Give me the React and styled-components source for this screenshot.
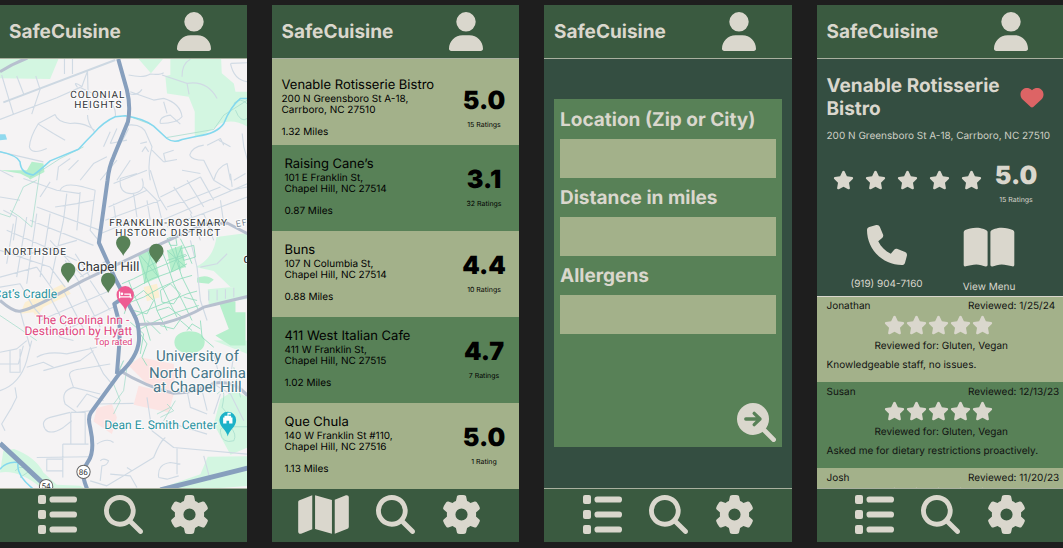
import React from "react";
import styled, { createGlobalStyle } from "styled-components";
import {
  FaUser,
  FaMagnifyingGlass,
  FaGear,
  FaMap,
  FaHeart,
  FaStar,
  FaPhone,
  FaBookOpen,
} from "react-icons/fa6";

const color = {
  board: "#1e1e1e",
  bar: "#3a5a40",
  deep: "#344e41",
  leaf: "#588157",
  sage: "#a3b18a",
  bone: "#dad7cd",
  line: "#a9b09f",
  heart: "#dd6465",
};

const GlobalStyle = createGlobalStyle`
  *, *::before, *::after { box-sizing: border-box; }
  body {
    margin: 0;
    background: ${color.board};
    font-family: Inter, "Liberation Sans", sans-serif;
    text-rendering: geometricPrecision;
    overflow-x: hidden;
  }
  h1, h2, h3, p, ul { margin: 0; padding: 0; }
  ul { list-style: none; }
`;

const Board = styled.main`
  display: grid;
  grid-template-columns: repeat(4, minmax(0, 1fr));
  column-gap: 25px;
  margin: 0 -1px;
  padding: 5px 0 6px;
`;

const Screen = styled.section`
  display: flex;
  flex-direction: column;
  overflow: hidden;
  background: ${color.deep};
  color: ${color.bone};
`;

const Header = styled.header`
  display: flex;
  align-items: center;
  justify-content: space-between;
  height: 54px;
  padding: 0 36px 0 10px;
  background: ${color.bar};
  border-bottom: 1px solid ${color.line};
`;

const Brand = styled.h1`
  font-size: 19px;
  line-height: 24px;
  font-weight: 700;
`;

const IconButton = styled.button`
  display: block;
  padding: 0;
  border: 0;
  background: none;
  color: inherit;
  cursor: pointer;

  svg {
    display: block;
    width: ${(p) => p.$w || 39}px;
    height: ${(p) => p.$h || 39}px;
  }
`;

const HeartButton = styled(IconButton)`
  color: ${color.heart};
`;

const Nav = styled.nav`
  display: flex;
  align-items: center;
  justify-content: flex-end;
  gap: 27px;
  height: 54px;
  padding: 0 38px 2px 0;
  background: ${color.bar};
  border-top: 1px solid ${(p) => p.$line || color.line};
`;

const MapArt = styled.svg`
  display: block;
  flex: 1 1 0;
  width: 100%;
  height: 0;
  min-height: 0;
  background: #f5f3f4;
  font-family: Roboto, "Liberation Sans", sans-serif;
`;

const MapLabel = styled.text`
  font-size: ${(p) => p.$size}px;
  font-weight: ${(p) => p.$weight || 400};
  letter-spacing: ${(p) => (p.$area ? "1px" : "normal")};
  fill: ${(p) => p.$fill || "#333639"};
  stroke: #ffffff;
  stroke-width: 2px;
  stroke-opacity: 0.8;
  stroke-linejoin: round;
  paint-order: stroke;
`;

const Row = styled.li`
  display: flex;
  justify-content: space-between;
  height: 86px;
  padding: 10px 10px 0 13px;
  background: ${(p) => (p.$dark ? color.leaf : color.sage)};
  color: #000;

  &:first-child { padding: 17px 10px 0; }
  &:last-child { height: 85px; }
`;

const RowName = styled.h2`
  font-size: 13px;
  line-height: 18px;
  font-weight: 400;
  white-space: nowrap;
`;

const Small = styled.p`
  font-size: 10px;
  line-height: 11px;
  font-weight: 400;
  white-space: nowrap;
`;

const Distance = styled(Small)`
  margin-top: 11px;
`;

const Score = styled.div`
  width: 50px;
  padding-top: ${(p) => p.$top || 0}px;
  text-align: center;
  white-space: nowrap;
`;

const ScoreValue = styled.strong`
  display: block;
  font-size: 25px;
  line-height: 30px;
  font-weight: 900;
`;

const ScoreCount = styled.span`
  display: block;
  margin-top: 5px;
  font-size: 7px;
  line-height: 8px;
`;

const SearchForm = styled.form`
  flex: 1;
  display: flex;
  flex-direction: column;
  margin: 40px 10px 41px;
  padding: 1px 6px 5px;
  background: ${color.leaf};
`;

const FieldLabel = styled.label`
  font-size: 19px;
  line-height: 39px;
  font-weight: 700;
  white-space: nowrap;
`;

const Field = styled.input`
  width: 100%;
  height: 39px;
  padding: 0 8px;
  border: 0;
  border-radius: 0;
  background: ${color.sage};
  color: #000;
  font: 400 14px Inter, sans-serif;
`;

const Submit = styled(IconButton)`
  align-self: flex-end;
  margin-top: auto;
`;

const Detail = styled.div`
  padding: 15px 10px 0;
  height: 237px;
`;

const DetailTop = styled.div`
  display: flex;
  align-items: center;
  justify-content: space-between;
  padding-right: 10px;
`;

const DetailName = styled.h2`
  font-size: 19px;
  line-height: 23px;
  font-weight: 700;
  white-space: nowrap;
`;

const DetailAddress = styled(Small)`
  margin-top: 11px;
  color: #cfd0c5;
`;

const RatingLine = styled.div`
  display: flex;
  align-items: flex-start;
  justify-content: space-between;
  margin-top: 19px;
  padding: 0 13px 0 6px;
`;

const Stars = styled.div`
  display: flex;
  justify-content: center;
  gap: ${(p) => p.$gap}px;
  padding: ${(p) => p.$pad || 0};
  color: ${color.bone};

  svg {
    width: 21px;
    height: 20px;
    flex: none;
  }
`;

const Actions = styled.div`
  display: flex;
  gap: 40px;
  margin-top: 21px;
  padding-left: 24px;
`;

const Action = styled.a`
  display: flex;
  flex-direction: column;
  align-items: center;
  gap: ${(p) => p.$gap}px;
  color: inherit;
  text-decoration: none;
  white-space: nowrap;
  font-size: 10px;
  line-height: 12px;

  svg {
    width: ${(p) => p.$w}px;
    height: ${(p) => p.$h}px;
  }
`;

const Reviews = styled.ul`
  flex: 1 1 0;
  min-height: 0;
  overflow: hidden;
  border-top: 1px solid ${color.bone};
`;

const Review = styled.li`
  height: 86px;
  padding: 4px 8px 0 10px;
  background: ${(p) => (p.$dark ? color.leaf : color.sage)};
  color: #111;

  &:first-child { height: 85px; padding-top: 3px; }
`;

const ReviewHead = styled.div`
  display: grid;
  grid-template-columns: minmax(0, 1fr) 88px;
  margin-bottom: 2px;
`;

const ReviewText = styled(Small)`
  line-height: 13px;
  margin-top: ${(p) => p.$top}px;
  text-align: ${(p) => (p.$center ? "center" : "left")};
`;

const ListIcon = () => (
  <svg viewBox="0 0 39 39" fill="currentColor" aria-hidden="true">
    {[0, 15, 30].map((y) => (
      <g key={y}>
        <rect x="0" y={y} width="8" height="9" rx="2" />
        <rect x="11.5" y={y + 1.5} width="27.5" height="6" rx="2.8" />
      </g>
    ))}
  </svg>
);

const SearchGoIcon = () => (
  <svg viewBox="0 0 39 39" fill="none" strokeLinecap="round" strokeLinejoin="round" aria-hidden="true">
    <path d="M27 27 36.6 36.6" stroke="currentColor" strokeWidth="4.8" />
    <circle cx="16" cy="16" r="16" fill="currentColor" />
    <path d="M8.8 16H23M17.2 10.4 23 16l-5.8 5.6" stroke={color.leaf} strokeWidth="3.4" />
  </svg>
);

const TopBar = () => (
  <Header>
    <Brand>SafeCuisine</Brand>
    <IconButton type="button" aria-label="Account" $w={34}>
      <FaUser />
    </IconButton>
  </Header>
);

const BottomBar = ({ first = "list", line }) => (
  <Nav $line={line}>
    {first === "map" ? (
      <IconButton type="button" aria-label="Map" $w={51} $h={45}>
        <FaMap />
      </IconButton>
    ) : (
      <IconButton type="button" aria-label="List">
        <ListIcon />
      </IconButton>
    )}
    <IconButton type="button" aria-label="Search">
      <FaMagnifyingGlass />
    </IconButton>
    <IconButton type="button" aria-label="Settings">
      <FaGear />
    </IconButton>
  </Nav>
);

const FiveStars = ({ gap, pad }) => (
  <Stars $gap={gap} $pad={pad} role="img" aria-label="5 out of 5 stars">
    {[1, 2, 3, 4, 5].map((n) => (
      <FaStar key={n} />
    ))}
  </Stars>
);

const Rating = ({ value, count, top }) => (
  <Score $top={top}>
    <ScoreValue>{value}</ScoreValue>
    <ScoreCount>{count}</ScoreCount>
  </Score>
);

/* Map artwork is drawn on a grid three times finer than the labels. */
const parks = [
  "M0 235V177H175L150 237Z",
  "M415 177H488L452 220Z",
  "M510 177H662L664 220 700 250 705 275H741V380Q700 355 660 370 620 402 583 412V335L565 290 500 280 495 228 510 225Z",
  "M648 710 741 698V862L690 860 640 812 585 800Q640 775 648 710Z",
  "M622 866 741 856V895L625 912Z",
  "M10 1350 42 1345Q105 1368 130 1415L170 1452 240 1455 262 1467H130Q60 1405 0 1415Z",
  "M741 1190 700 1170 660 1195 640 1270 690 1362 741 1340Z",
  "M741 1366 622 1368 600 1420 480 1462 590 1467 741 1455Z",
  "M741 1020V1060L690 1040 640 1020Z",
];
const groves = [
  "M95 485 130 490 133 515 90 538 75 520Z",
  "M415 760 455 742 478 830 432 850Z",
  "M500 750 545 735 556 800 512 815Z",
  "M655 905 705 902V935H735V1035H690L645 1005 685 985Z",
  "M590 832Q620 820 640 838L625 850 590 846Z",
  "M522 1025Q524 993 567 992 612 993 613 1025 610 1057 567 1058 524 1057 522 1025Z",
  "M0 510H130L90 535 60 520Z",
];
const campus = [
  "M385 1095 420 1070 520 1090 525 1125 515 1170 440 1150Z",
  "M415 1155 520 1180 505 1235 400 1212Z",
  "M290 1222 335 1210 350 1250 335 1300 280 1262Z",
];
const plazas = [
  "M75 905 190 850 212 880 130 920 110 950 100 935 60 940Z",
  "M430 860 470 850 478 890 440 902Z",
];
const streets = [
  "M5 225 40 342M50 228 72 285M107 228 120 268 95 342M193 177V222M217 177V222M0 358 170 293 240 262M262 213 245 260Q215 240 232 262",
  "M240 262 320 300Q350 320 345 350M165 343Q170 365 210 370 250 365 283 390M115 370Q90 410 88 440 95 465 140 445M115 370 165 343M115 372 160 400 195 420M262 345Q262 370 283 395M262 215 265 330",
  "M385 225Q430 235 450 222 480 225 490 218M386 280Q410 290 425 268M390 275 460 300 490 295M490 295Q540 310 545 350 530 370 480 370M480 370Q475 350 510 345L540 372M490 305 500 340M545 230Q545 190 570 178M485 225 560 250Q620 240 650 295M560 250 566 283M690 190Q700 240 741 245M692 190 741 188",
  "M382 375Q430 370 440 405L455 440Q440 490 450 540M350 385 330 430M330 395 310 440M385 385 375 405 350 450M420 430 440 425M425 455 435 440 445 455M490 485 455 450M490 485 530 478M495 483 490 460 520 450",
  "M568 465Q575 440 610 435M568 465Q575 480 610 480L640 540M640 540Q650 500 680 490L690 540M620 435 660 415 670 435M655 420 690 440M725 400 730 440 741 480M545 510 600 520M700 540 735 520",
  "M0 455 130 485M170 540 175 500 210 475M205 510 235 480M240 540 280 490 320 470M300 540 350 480M0 510 40 530M330 430 380 420M390 480 350 540",
  "M70 535 170 570 240 580M150 545 120 590M180 570Q190 545 250 560L285 570M165 620 230 610 280 600M200 580 190 660M240 575 230 690M285 570 270 690 295 720M110 620 300 690M90 660 280 735M20 690 230 780M0 750 150 800M0 590 60 600M10 630 50 650 40 720",
  "M40 670 20 790M80 650 50 830M110 640 80 850M150 640 120 830M190 660 150 850M150 720 250 830M55 770 230 720M0 830 110 800M110 800 160 870M150 800 195 860M195 780 240 850M225 760 270 830",
  "M0 860 60 850 100 920M100 920 180 1010 220 1020M150 890 210 1000M190 870 250 985M235 850 300 980M270 840 330 930M120 960 330 870M170 1000 350 915M60 930 90 1040M240 830 320 780",
  "M410 520 360 535Q355 580 395 580 440 575 425 535M430 560 470 600 485 660M450 510 475 590 500 630M340 550 440 510M500 620 560 600 660 560M480 590 600 530M520 560 575 640M560 540 610 620M600 530 640 600M485 660 741 550M500 680 741 590M640 540 690 570 741 560M690 520 695 560",
  "M325 620 440 570M315 660 480 600M300 700 400 660M340 610 350 680M400 580 410 650M440 600 450 660M660 600 670 670M610 640 640 720M570 640 600 720M570 720 590 800 600 900 620 960M600 800 650 790 680 760M625 870V900M650 868V900M675 866V895M700 862V890",
  "M0 1055 50 1045 80 1020M30 1050V1115H60V1045M0 1090H55L70 1035M0 1170Q60 1150 80 1080L95 1020M80 1100 130 1085 160 1100M45 1160 50 1190 35 1220 5 1270 15 1290M110 1070Q140 1050 200 1060L290 1040M130 1110 240 1080 280 1050M210 1130Q200 1110 240 1105L330 1090M210 1130 220 1160Q180 1170 195 1210L230 1235 270 1230",
  "M135 1285Q120 1260 150 1250L210 1235M135 1285Q150 1305 190 1280L215 1260M220 1160 300 1180M212 1235V1330M212 1235H255V1330M188 1330H265M188 1330V1430M140 1375H188V1410H140ZM110 1370 270 1368M270 1040 310 1120 335 1150M230 1220 260 1180 310 1200",
  "M290 1210 400 1208M290 1330Q320 1310 340 1325M300 1380Q310 1370 325 1380 320 1395 305 1395L300 1440M270 1440 320 1455 395 1410 460 1370Q480 1320 495 1310M330 1420 390 1425 410 1460M395 1410 380 1400M475 1430Q470 1390 510 1385L540 1390M475 1430 500 1435 535 1425M455 1290 520 1340 741 1360M520 1270 620 1300M440 1190 455 1290M610 1365 630 1440M530 1340 530 1420",
  "M520 1140 560 1170 570 1220 620 1240M560 1170 640 1160M600 1150 620 1230M640 1150 690 1180 730 1260M640 1240 660 1180M700 1060 690 1130M640 1060 660 1140",
];
const trails = [
  "M0 640 30 650 70 560 110 540M90 530 110 520 180 475 250 440M120 510 95 680 60 650 30 630M390 350 450 372M500 412 640 388 670 345 741 300M700 310Q720 290 741 312M705 330Q720 370 741 355",
  "M0 945 60 985 110 1020M350 1120 370 1080 340 1150 360 1200 340 1240M340 1210 370 1170 380 1100M650 1180Q680 1150 665 1220L690 1250 680 1300M700 1100 720 1190M45 1410Q70 1380 100 1430M60 1430 90 1410",
  "M480 1250 520 1230 500 1210M470 1240 510 1220M490 1260 525 1200M660 1295Q655 1275 690 1280 710 1300 700 1320 665 1330 660 1295M690 1278H741",
];

/* Footpaths across the university quads. */
const footpaths = [
  "M365 850 400 835 440 815 500 790 560 765M370 880 410 860 455 835 520 812 560 790M378 910 430 890 480 862 540 835 575 825M400 950 450 925 500 905 560 880 590 872M420 985 470 960 530 935 595 915",
  "M385 840 400 880 425 935 440 985 450 1020M415 765 432 815 455 870 470 930 500 990M440 748 462 800 482 850 505 900 530 950M478 735 500 790 520 850 548 905 575 960M505 722 525 770 545 830 570 880 595 930M540 715 560 755 575 790",
  "M420 765 475 830M455 742 432 850M440 800 478 780M500 750 556 800M545 735 512 815M525 740 540 810M500 780 556 762M510 735 500 715 525 705 530 735ZM540 745 580 735 585 770 550 780Z",
  "M365 870 355 895 380 915 372 940M390 900 430 870 460 900 440 940 400 930M480 870 510 850 540 880 520 910 485 905ZM470 930 505 920 545 950 520 985 480 975M550 890 590 900M440 960 480 1000M390 965 430 1000 420 1060M540 960 575 990",
  "M420 1000 440 1030 425 1070 440 1095M400 1080 380 1100M600 960 605 1010 640 1040M560 990 575 970 600 985",
];

const pins = [
  [123, 243],
  [156, 251],
  [68, 270],
  [108, 280],
];

const CityMap = () => (
  <MapArt viewBox="-1 59 247 430" preserveAspectRatio="xMinYMin slice" role="img" aria-label="Map of Chapel Hill">
    <g transform="scale(.33333)" fill="none" strokeLinejoin="round">
      <path d={parks.join("")} fill="#d3f6e1" />
      <path d={groves.join("")} fill="#b6efcc" />
      <path d={campus.join("")} fill="#fce4e3" />
      <path d={plazas.join("")} fill="#fcefd3" />
      <path d={streets.join("")} stroke="#d0dae4" strokeWidth="3.4" />
      <path d={trails.join("")} stroke="#a4dccb" strokeWidth="2.2" />
      <path d={footpaths.join("")} stroke="#93dcbd" strokeWidth="2.6" />
      <path d="M0 402H16L21 418 0 420Z" fill="#90d9ee" />
      <path
        d="M0 455Q50 465 60 485 62 520 100 524 120 510 150 482L235 447Q255 425 280 400 310 365 345 350L375 347Q430 355 460 378L500 415Q520 430 545 418L590 408Q650 400 670 370 690 320 720 295H741M0 1405Q20 1380 55 1385 45 1420 100 1465"
        stroke="#83d8ee"
        strokeWidth="4.5"
      />
      <path d="M10 307 345 180" stroke="#cdd8e2" strokeWidth="6" />
      <path
        d="M0 215Q40 190 82 174M0 900Q40 935 60 932 90 928 180 878L250 840 450 745 610 672 680 668 741 700M415 972 490 968Q560 950 610 920 670 905 741 888M350 1105Q440 1160 520 1178 590 1175 640 1148 700 1135 741 1185"
        stroke="#b7c0cf"
        strokeWidth="9"
      />
      <g stroke="#879fbd" strokeWidth="12">
        <path d="M354 177 380 270Q392 320 383 365L340 470Q326 500 322 540L296 727 345 835 400 940Q418 970 416 1020 412 1070 355 1122L272 1236Q262 1250 270 1280 285 1350 265 1380L248 1410Q248 1435 262 1467" />
        <path d="M372 890 342 910 358 970V1020L350 1120" />
        <path d="M0 1328 150 1467M480 1467 741 1402" strokeWidth="15" />
      </g>
      <g>
        <path d="M375 932C372 912 349 905 349 883a26 26 0 0 1 52 0c0 22-23 29-26 49Z" fill="#ee5b92" />
        <path d="M358 873v20M358 889h34v4M372 881h18v7" stroke="#fff" strokeWidth="4" />
        <circle cx="365" cy="880" r="4" fill="#fff" />
        <path d="M682 1307C679 1288 657 1280 657 1258a25 25 0 0 1 50 0c0 22-22 30-25 49Z" fill="#1cb2c8" />
        <path d="M668 1250h28v18h-10v-8h-8v8h-10zM672 1245h20v6h-20zM681 1236h10v5h-7v6h-3z" fill="#fff" />
      </g>
      <g fill="#fff" stroke="#666" strokeWidth="3">
        <circle cx="250" cy="1413" r="20" />
        <circle cx="138" cy="1456" r="20" />
      </g>
    </g>
    <MapLabel $size={10} $area x="70" y="98">COLONIAL</MapLabel>
    <MapLabel $size={10} $area x="74" y="108">HEIGHTS</MapLabel>
    <MapLabel $size={10} $area x="109" y="226">FRANKLIN-ROSEMARY</MapLabel>
    <MapLabel $size={10} $area x="115" y="236">HISTORIC DISTRICT</MapLabel>
    <MapLabel $size={10} $area x="4" y="255">NORTHSIDE</MapLabel>
    <MapLabel $size={9} $area $fill="#7a8794" x="236" y="227" transform="rotate(-12 236 227)">EF</MapLabel>
    <MapLabel $size={10} $weight={500} x="243" y="263">C</MapLabel>
    <MapLabel $size={13} x="77" y="271">Chapel Hill</MapLabel>
    <MapLabel $size={12} $fill="#2a93a0" x="57" y="298" textAnchor="end">Cat’s Cradle</MapLabel>
    <g textAnchor="end">
      <MapLabel $size={12} $fill="#e0457d" x="129" y="323">The Carolina Inn -</MapLabel>
      <MapLabel $size={12} $fill="#e0457d" x="132" y="334">Destination by Hyatt</MapLabel>
      <MapLabel $size={9} $fill="#e0457d" x="132" y="344">Top rated</MapLabel>
    </g>
    <g textAnchor="middle">
      <MapLabel $size={15} $fill="#477688" x="197" y="360">University of</MapLabel>
      <MapLabel $size={15} $fill="#477688" x="197" y="377">North Carolina</MapLabel>
      <MapLabel $size={15} $fill="#477688" x="197" y="391">at Chapel Hill</MapLabel>
      <MapLabel $size={8} x="83" y="474">86</MapLabel>
      <MapLabel $size={8} x="46" y="488">54</MapLabel>
    </g>
    <MapLabel $size={12} $fill="#2a93a0" x="104" y="428">Dean E. Smith Center</MapLabel>
    {pins.map(([x, y]) => (
      <path
        key={`${x}-${y}`}
        transform={`translate(${x} ${y})`}
        d="M0 12.5C-1 9-7.2 4.5-7.2-.5a7.2 7.2 0 0 1 14.4 0C7.2 4.5 1 9 0 12.5Z"
        fill={color.leaf}
      />
    ))}
  </MapArt>
);

const restaurants = [
  ["Venable Rotisserie Bistro", "200 N Greensboro St A-18,", "Carrboro, NC 27510", "1.32 Miles", "5.0", "15 Ratings"],
  ["Raising Cane’s", "101 E Franklin St,", "Chapel Hill, NC 27514", "0.87 Miles", "3.1", "32 Ratings"],
  ["Buns", "107 N Columbia St,", "Chapel Hill, NC 27514", "0.88 Miles", "4.4", "10 Ratings"],
  ["411 West Italian Cafe", "411 W Franklin St,", "Chapel Hill, NC 27515", "1.02 Miles", "4.7", "7 Ratings"],
  ["Que Chula", "140 W Franklin St #110,", "Chapel Hill, NC 27516", "1.13 Miles", "5.0", "1 Rating"],
];

const fields = [
  ["location", "Location (Zip or City)"],
  ["distance", "Distance in miles"],
  ["allergens", "Allergens"],
];

const reviews = [
  ["Jonathan", "1/25/24", "Knowledgeable staff, no issues."],
  ["Susan", "12/13/23", "Asked me for dietary restrictions proactively."],
  ["Josh", "11/20/23", ""],
];

export default function App() {
  return (
    <>
      <GlobalStyle />
      <Board>
        <Screen>
          <TopBar />
          <CityMap />
          <BottomBar />
        </Screen>

        <Screen>
          <TopBar />
          <ul>
            {restaurants.map(([name, street, city, distance, score, count], i) => (
              <Row key={name} $dark={i % 2 === 1}>
                <div>
                  <RowName>{name}</RowName>
                  <Small>{street}</Small>
                  <Small>{city}</Small>
                  <Distance>{distance}</Distance>
                </div>
                <Rating value={score} count={count} top={10} />
              </Row>
            ))}
          </ul>
          <BottomBar first="map" line={color.sage} />
        </Screen>

        <Screen>
          <TopBar />
          <SearchForm onSubmit={(e) => e.preventDefault()}>
            {fields.map(([id, label]) => (
              <React.Fragment key={id}>
                <FieldLabel htmlFor={id}>{label}</FieldLabel>
                <Field id={id} name={id} type="text" />
              </React.Fragment>
            ))}
            <Submit type="submit" aria-label="Search restaurants">
              <SearchGoIcon />
            </Submit>
          </SearchForm>
          <BottomBar />
        </Screen>

        <Screen>
          <TopBar />
          <Detail>
            <DetailTop>
              <DetailName>
                Venable Rotisserie
                <br />
                Bistro
              </DetailName>
              <HeartButton type="button" aria-label="Favourite" $w={24} $h={23}>
                <FaHeart />
              </HeartButton>
            </DetailTop>
            <DetailAddress>200 N Greensboro St A-18, Carrboro, NC 27510</DetailAddress>
            <RatingLine>
              <FiveStars gap={11} pad="9px 0 0" />
              <Rating value="5.0" count="15 Ratings" />
            </RatingLine>
            <Actions>
              <Action href="tel:+19199047160" $w={40} $h={40} $gap={13}>
                <FaPhone />
                (919) 904-7160
              </Action>
              <Action href="#menu" $w={52} $h={45} $gap={11}>
                <FaBookOpen />
                View Menu
              </Action>
            </Actions>
          </Detail>
          <Reviews>
            {reviews.map(([name, date, text], i) => (
              <Review key={name} $dark={i % 2 === 1}>
                <ReviewHead>
                  <ReviewText>{name}</ReviewText>
                  <ReviewText>Reviewed: {date}</ReviewText>
                </ReviewHead>
                <FiveStars gap={1} pad="0 6px 0 0" />
                <ReviewText $top={5} $center>Reviewed for: Gluten, Vegan</ReviewText>
                <ReviewText $top={6}>{text}</ReviewText>
              </Review>
            ))}
          </Reviews>
          <BottomBar />
        </Screen>
      </Board>
    </>
  );
}
